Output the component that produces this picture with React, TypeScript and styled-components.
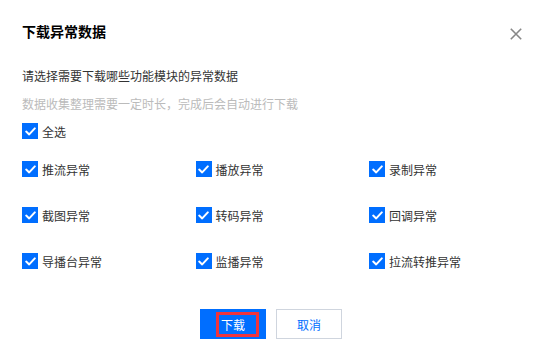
import React from 'react';
import styled, { createGlobalStyle } from 'styled-components';

const GlobalStyle = createGlobalStyle`
    html, body {
        margin: 0;
        padding: 0;
        background: #ffffff;
    }
    body {
        font-family: 'Noto Sans CJK SC', 'Noto Sans', sans-serif;
        -webkit-font-smoothing: antialiased;
    }
`;

const Dialog = styled.section`
    width: 542px;
    height: 359px;
    box-sizing: border-box;
    padding: 20px 20px 0 22px;
    background: #ffffff;
`;

const Header = styled.header`
    display: flex;
    justify-content: space-between;
    align-items: flex-start;
`;

const Title = styled.h2`
    margin: 0;
    font-size: 14px;
    line-height: 22px;
    font-weight: 700;
    color: #000000;
`;

const CloseButton = styled.button`
    margin: 8px 0 0;
    padding: 0;
    width: 12px;
    height: 12px;
    border: none;
    background: none;
    display: flex;
    cursor: pointer;
`;

const Intro = styled.p`
    margin: 24px 0 0;
    font-size: 12px;
    line-height: 20px;
    color: #333333;
`;

const Hint = styled.p`
    margin: 8px 0 0;
    font-size: 12px;
    line-height: 20px;
    color: #bbbbbb;
`;

const SelectAll = styled.div`
    margin-top: 9px;
`;

const Grid = styled.div`
    margin-top: 22px;
    display: grid;
    grid-template-columns: repeat(3, 173.5px);
    row-gap: 30px;
`;

const Option = styled.label`
    display: flex;
    align-items: center;
    height: 16px;
    font-size: 12px;
    color: #333333;
    cursor: pointer;
`;

const Box = styled.span<{ $checked: boolean }>`
    flex: none;
    width: 16px;
    height: 16px;
    margin-right: 4px;
    display: flex;
    align-items: center;
    justify-content: center;
    box-sizing: border-box;
    background: ${(p) => (p.$checked ? '#006eff' : '#ffffff')};
    border: ${(p) => (p.$checked ? 'none' : '1px solid #ddd')};
`;

const Footer = styled.footer`
    margin-top: 40px;
    margin-left: -22px;
    margin-right: -20px;
    display: flex;
    justify-content: center;
    gap: 10px;
`;

const Button = styled.button<{ $primary?: boolean }>`
    position: relative;
    width: 66px;
    height: 30px;
    box-sizing: border-box;
    padding: 0;
    font-family: inherit;
    font-size: 12px;
    cursor: pointer;
    background: ${(p) => (p.$primary ? '#006eff' : '#ffffff')};
    color: ${(p) => (p.$primary ? '#ffffff' : '#006eff')};
    border: ${(p) => (p.$primary ? 'none' : '1px solid #cfd5de')};
`;

const Highlight = styled.span`
    position: absolute;
    left: 16px;
    top: 3px;
    width: 43px;
    height: 25px;
    box-sizing: border-box;
    border: 3px solid #f0343c;
    pointer-events: none;
`;

const Check = () => (
    <svg width="11" height="9" viewBox="0 0 11 9" fill="none">
        <path
            d="M1.2 4.6L4.2 7.4L9.8 1.4"
            stroke="#ffffff"
            strokeWidth="2"
            strokeLinecap="round"
            strokeLinejoin="round"
        />
    </svg>
);

const CheckItem: React.FC<{ label: string }> = ({ label }) => (
    <Option>
        <Box $checked>
            <Check />
        </Box>
        {label}
    </Option>
);

const modules = [
    '推流异常',
    '播放异常',
    '录制异常',
    '截图异常',
    '转码异常',
    '回调异常',
    '导播台异常',
    '监播异常',
    '拉流转推异常',
];

const App: React.FC = () => {
    return (
        <>
            <GlobalStyle />
            <Dialog>
                <Header>
                    <Title>下载异常数据</Title>
                    <CloseButton aria-label="关闭">
                        <svg width="12" height="12" viewBox="0 0 12 12">
                            <path
                                d="M0.8 0.8L11.2 11.2M11.2 0.8L0.8 11.2"
                                stroke="#888888"
                                strokeWidth="1.6"
                            />
                        </svg>
                    </CloseButton>
                </Header>
                <Intro>请选择需要下载哪些功能模块的异常数据</Intro>
                <Hint>数据收集整理需要一定时长，完成后会自动进行下载</Hint>
                <SelectAll>
                    <CheckItem label="全选" />
                </SelectAll>
                <Grid>
                    {modules.map((m) => (
                        <CheckItem key={m} label={m} />
                    ))}
                </Grid>
                <Footer>
                    <Button $primary>
                        下载
                        <Highlight />
                    </Button>
                    <Button>取消</Button>
                </Footer>
            </Dialog>
        </>
    );
};

export default App;
